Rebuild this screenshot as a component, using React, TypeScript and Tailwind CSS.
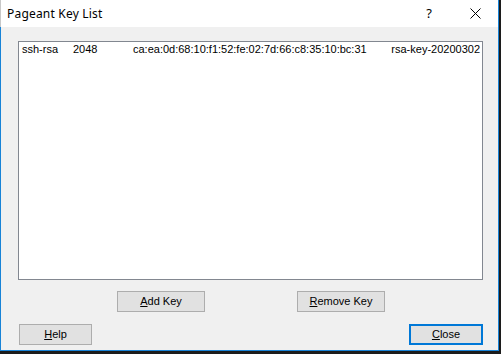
import React from 'react';

const keys = [
    {
        type: 'ssh-rsa',
        bits: '2048',
        fingerprint: 'ca:ea:0d:68:10:f1:52:fe:02:7d:66:c8:35:10:bc:31',
        comment: 'rsa-key-20200302',
    },
];

const Btn: React.FC<{ k: string; rest: string; w: string; focused?: boolean }> = ({ k, rest, w, focused }) => (
    <div
        className={`${w} h-[21px] flex items-center justify-center bg-[#e1e1e1] text-[11px] text-black ${
            focused ? 'border-2 border-[#0078d7]' : 'border border-[#adadad]'
        }`}
    >
        <span>
            <u className="underline-offset-1">{k}</u>
            {rest}
        </span>
    </div>
);

const App: React.FC = () => {
    return (
        <div className="w-[501px] h-[354px] bg-[#1c1c1c] font-['Liberation_Sans',Arial,sans-serif]">
            <div className="w-[499px] h-[351px] flex flex-col bg-[#f0f0f0] border-x border-b border-[#1883d7]">
                {/* title bar */}
                <div className="h-[27px] bg-white flex items-center pl-[6px] border-l border-[#c8c8c8] -ml-px">
                    <span className="flex-1 text-[12px] text-black font-['Noto_Sans',sans-serif] tracking-[0.2px]">
                        Pageant Key List
                    </span>
                    <span className="w-[46px] text-center text-[13px] text-black font-['Noto_Sans',sans-serif]">?</span>
                    <div className="w-[46px] flex justify-center">
                        <svg width="11" height="11" viewBox="0 0 11 11">
                            <path d="M0.5 0.5 L10.5 10.5 M10.5 0.5 L0.5 10.5" stroke="#000" strokeWidth="1" />
                        </svg>
                    </div>
                </div>

                {/* key list */}
                <div className="ml-[17px] mr-[15px] mt-[14px] h-[239px] bg-white border border-[#828790] pt-[1px]">
                    {keys.map((key) => (
                        <div key={key.fingerprint} className="flex h-[13px] items-center pl-[3px] pr-[2px] text-[11px] leading-[13px] text-black">
                            <span className="w-[51px]">{key.type}</span>
                            <span className="w-[60px]">{key.bits}</span>
                            <span className="flex-1">{key.fingerprint}</span>
                            <span>{key.comment}</span>
                        </div>
                    ))}
                </div>

                <div className="flex mt-[11px] pl-[116px] gap-[92px]">
                    <Btn k="A" rest="dd Key" w="w-[88px]" />
                    <Btn k="R" rest="emove Key" w="w-[88px]" />
                </div>

                <div className="flex justify-between mt-[12px] pl-[18px] pr-[15px]">
                    <Btn k="H" rest="elp" w="w-[73px]" />
                    <Btn k="C" rest="lose" w="w-[74px]" focused />
                </div>
            </div>
        </div>
    );
};

export default App;
